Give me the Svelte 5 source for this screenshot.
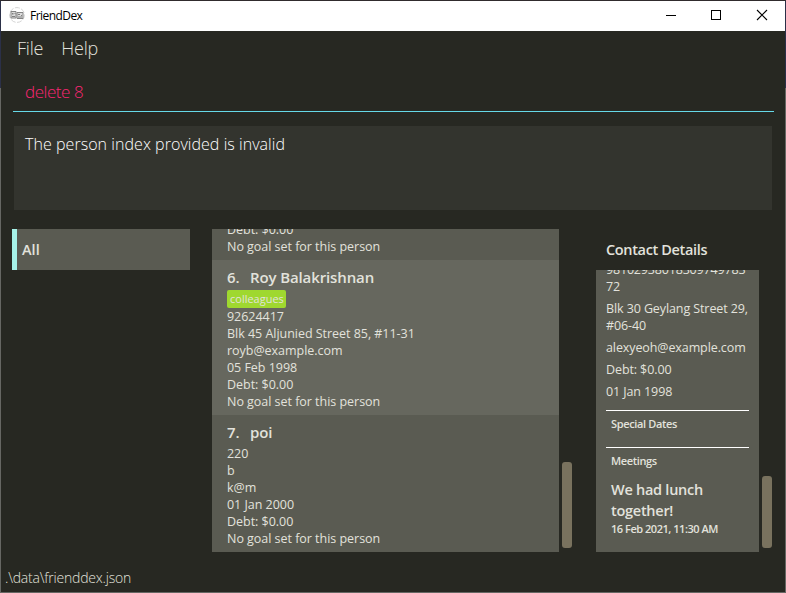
<script>
  const people = [
    {
      index: 5, name: '', shade: 'odd',
      lines: ['Debt: $0.00', 'No goal set for this person']
    },
    {
      index: 6, name: 'Roy Balakrishnan', tag: 'colleagues', shade: 'even',
      lines: ['92624417', 'Blk 45 Aljunied Street 85, #11-31', 'royb@example.com', '05 Feb 1998', 'Debt: $0.00', 'No goal set for this person']
    },
    {
      index: 7, name: 'poi', shade: 'odd',
      lines: ['220', 'b', 'k@m', '01 Jan 2000', 'Debt: $0.00', 'No goal set for this person']
    }
  ];
</script>

<div class="desktop">
  <div class="window">
    <header class="titlebar">
      <svg class="logo" width="16" height="16" viewBox="0 0 16 16">
        <circle cx="8" cy="8" r="7.400" fill="#fff" stroke="#d4d4d4" stroke-dasharray="5 1.5" />
        <path d="M2 4.500h5v6.500h-5z M8 5.500h6v6h-6z" fill="#ddd" stroke="#858585" />
        <path d="M3 6h1.500v1.500H3zM5.500 6h1v1h-1zM3 9h3v1H3zM9 7h2v1H9zM12 8h1v1h-1zM9 9.500h4v1H9z" fill="#808080" />
      </svg>
      <span class="app-name">FriendDex</span>
      <svg class="controls" width="138" height="30" viewBox="0 0 138 30" fill="none" stroke="#000">
        <path d="M19 14.500h10" />
        <rect x="64.500" y="9.500" width="9" height="9" />
        <path d="M110 9l10 10M120 9l-10 10" stroke-width="1.100" />
      </svg>
    </header>

    <nav class="menu"><span class="file">File</span><span class="help">Help</span></nav>
    <div class="command"><span>delete 8</span></div>
    <div class="result"><span>The person index provided is invalid</span></div>

    <main>
      <aside class="groups"><div class="group"><span>All</span></div></aside>

      <section class="people">
        {#each people as p}
          <article class={p.shade}>
            {#if p.name}
              <h2><span class="number">{p.index}.</span>{p.name}</h2>
            {/if}
            {#if p.tag}<div class="tag"><span>{p.tag}</span></div>{/if}
            {#each p.lines as line}<p><span>{line}</span></p>{/each}
          </article>
        {/each}
      </section>
      <div class="track"><div class="thumb list-thumb"></div></div>

      <section class="contact">
        <h3><span>Contact Details</span></h3>
        <div class="details">
          <div class="fields">
            <p class="phone">98102938018309749783<br />72</p>
            <p>Blk 30 Geylang Street 29,<br />#06-40</p>
            <p>alexyeoh@example.com</p>
            <p>Debt: $0.00</p>
            <p>01 Jan 1998</p>
          </div>
          <div class="dates"><span>Special Dates</span></div>
          <div class="meetings">
            <span>Meetings</span>
            <h4>We had lunch<br />together!</h4>
            <time>16 Feb 2021, 11:30 AM</time>
          </div>
        </div>
      </section>
      <div class="track"><div class="thumb detail-thumb"></div></div>
    </main>

    <footer><span>.\data\frienddex.json</span></footer>
  </div>
</div>

<style>
  :global(body) { margin: 0; overflow: hidden; }
  .desktop {
    box-sizing: border-box; width: 786px; height: 593px; padding: 1px; overflow: hidden;
    background: linear-gradient(#302b2d 0 1px, #2b3048 1px 88px, #666763 88px);
    font-family: "Open Sans", "Noto Sans", sans-serif; color: #e2e2dc;
  }
  .window { display: flex; flex-direction: column; width: 784px; height: 591px; background: #272822; }
  .titlebar { display: flex; align-items: center; height: 30px; flex: none; background: #fff; color: #000; }
  .logo { margin-left: 8px; margin-top: -2px; }
  .app-name { margin: -2px 0 0 5px; font-size: 12px; letter-spacing: -.55px; }
  .controls { margin-left: auto; }
  .menu { display: flex; height: 36px; flex: none; padding-left: 16px; gap: 18px; font-size: 18px; font-weight: 300; line-height: 35px; letter-spacing: -.2px; }
  .command {
    height: 45px; flex: none; box-sizing: border-box; margin: 0 11px 0 12px; padding: 5px 0 0 12px;
    border-bottom: 1px solid #66d9e8; color: #f92672; font-size: 17px; font-weight: 300; line-height: 39px;
  }
  .command span { letter-spacing: -.45px; }
  .result {
    height: 84px; flex: none; box-sizing: border-box; margin: 14px 13px 0; padding: 6px 11px;
    background: #33342e; color: #fff; font-size: 16px; font-weight: 300; line-height: 24px;
  }
  .result span { letter-spacing: .05px; }
  main { display: flex; height: 323px; flex: none; margin-top: 19px; padding-left: 11px; }
  .groups { width: 178px; flex: none; margin-right: 22px; }
  .group {
    box-sizing: border-box; height: 41px; border-left: 5px solid #a6f2e8; padding-left: 5px;
    background: #5a5b52; font-size: 14.500px; font-weight: 600; line-height: 41px;
  }
  .people { display: flex; flex-direction: column; justify-content: flex-end; width: 347px; height: 323px; flex: none; overflow: hidden; }
  article { padding: 5px 15px; flex: none; font-size: 12.500px; line-height: 17px; }
  .odd { background: #5a5b52; }
  .even { background: #66675e; }
  article p { height: 17px; letter-spacing: -.03px; }
  h2, h3, h4, p { margin: 0; white-space: nowrap; }
  h2 { height: 25px; font-size: 15px; font-weight: 600; line-height: 25px; letter-spacing: -.12px; }
  .number { display: inline-block; width: 23px; }
  .tag { display: flex; height: 18px; }
  .tag span { width: 53px; padding: 0 3px; border-radius: 2px; background: #9fd82f; font-size: 11px; line-height: 18px; }
  .track { display: flex; width: 13px; flex: none; padding-left: 3px; box-sizing: border-box; align-items: flex-end; }
  .thumb { width: 10px; border-radius: 3px; background: #79725e; margin-bottom: 4px; }
  .list-thumb { height: 86px; }
  .detail-thumb { height: 72px; }
  .contact { width: 163px; flex: none; margin-left: 24px; }
  h3 { height: 41px; padding-left: 10px; font-size: 14.500px; font-weight: 600; line-height: 41px; letter-spacing: -.35px; }
  .details { box-sizing: border-box; height: 282px; padding: 0 10px; overflow: hidden; background: #5a5b52; }
  .fields { display: flex; flex-direction: column; justify-content: flex-end; gap: 5px; height: 140px; box-sizing: border-box; padding-bottom: 10px; font-size: 12.500px; line-height: 17px; letter-spacing: -.1px; }
  .phone { letter-spacing: -.18px; }
  .dates, .meetings { border-top: 1px solid #fff; padding-left: 5px; font-size: 11px; font-weight: 600; line-height: 26px; letter-spacing: -.35px; white-space: nowrap; }
  .dates { height: 36px; }
  .meetings > span { display: block; height: 31px; }
  h4 { font-size: 14.500px; font-weight: 600; line-height: 21px; letter-spacing: -.27px; }
  time { display: block; line-height: 16px; letter-spacing: -.47px; }
  footer { margin-top: auto; height: 28px; padding-left: 4px; font-size: 14px; font-weight: 300; line-height: 28px; letter-spacing: -.2px; }
</style>
